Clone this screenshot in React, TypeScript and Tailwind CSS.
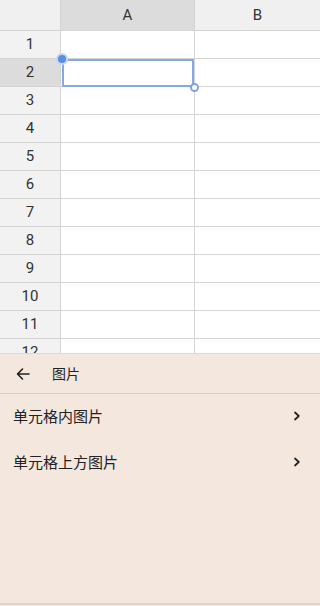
import React from 'react';

const rows = Array.from({ length: 12 }, (_, i) => i + 1);

const Chevron: React.FC = () => (
  <svg width="10" height="10" viewBox="0 0 10 10" fill="none">
    <path d="M3 1.5 L6.8 5 L3 8.5" stroke="#222" strokeWidth="1.7" strokeLinecap="round" strokeLinejoin="round" />
  </svg>
);

const App: React.FC = () => {
  return (
    <div className="w-[320px] h-[606px] flex flex-col bg-white overflow-hidden" style={{ fontFamily: 'Roboto, "Noto Sans CJK SC", sans-serif' }}>
      {/* Sheet */}
      <div className="h-[353px] flex flex-col overflow-hidden relative">
        <div className="flex h-[31px] shrink-0 bg-[#f0f0f0] border-b border-[#d4d4d4] text-[15px] text-[#333]">
          <div className="w-[61px] shrink-0 border-r border-[#d4d4d4]" />
          <div className="w-[134px] shrink-0 bg-[#dcdcdc] border-r border-[#d4d4d4] flex items-center justify-center">A</div>
          <div className="flex-1 flex items-center justify-center">B</div>
        </div>
        {rows.map((r) => (
          <div key={r} className="flex h-[28px] shrink-0 border-b border-[#d4d4d4] text-[15px] text-[#333]">
            <div className={`w-[61px] shrink-0 border-r border-[#d4d4d4] flex items-center justify-center ${r === 2 ? 'bg-[#dcdcdc]' : 'bg-[#f2f2f2]'}`}>{r}</div>
            <div className="w-[134px] shrink-0 border-r border-[#d4d4d4]" />
            <div className="flex-1" />
          </div>
        ))}
        {/* selection */}
        <div className="absolute left-[62px] top-[59px] w-[132px] h-[28px] border-2 border-[#86a8e4]" />
        <div className="absolute left-[58px] top-[55px] w-[8px] h-[8px] rounded-full bg-[#5b8ee0] ring-2 ring-[#c5d6f4]" />
        <div className="absolute left-[190px] top-[83px] w-[9px] h-[9px] rounded-full bg-white border-2 border-[#7fa2e0]" />
      </div>

      {/* Panel */}
      <div className="flex-1 flex flex-col bg-[#f3e7de] border-t border-[#e6d6ca]" style={{ fontFamily: '"Noto Sans CJK SC", sans-serif' }}>
        <div className="h-[40px] shrink-0 flex items-center border-b border-[#dfcbbd]">
          <svg className="ml-[14px]" width="18" height="18" viewBox="0 0 18 18" fill="none">
            <path d="M15 9 H3.5 M8.5 4 L3.5 9 L8.5 14" stroke="#222" strokeWidth="1.6" strokeLinecap="round" strokeLinejoin="round" />
          </svg>
          <span className="ml-[20px] text-[14px] text-[#222]">图片</span>
        </div>
        <div className="flex flex-col -mt-[1px]">
          <div className="h-[46px] flex items-center justify-between pl-[13px] pr-[18px]">
            <span className="text-[15px] text-[#222]">单元格内图片</span>
            <Chevron />
          </div>
          <div className="h-[46px] flex items-center justify-between pl-[13px] pr-[18px]">
            <span className="text-[15px] text-[#222]">单元格上方图片</span>
            <Chevron />
          </div>
        </div>
        <div className="flex-1" />
        <div className="h-[2px] bg-[#e3d2c5] mb-[1px]" />
      </div>
    </div>
  );
};

export default App;
